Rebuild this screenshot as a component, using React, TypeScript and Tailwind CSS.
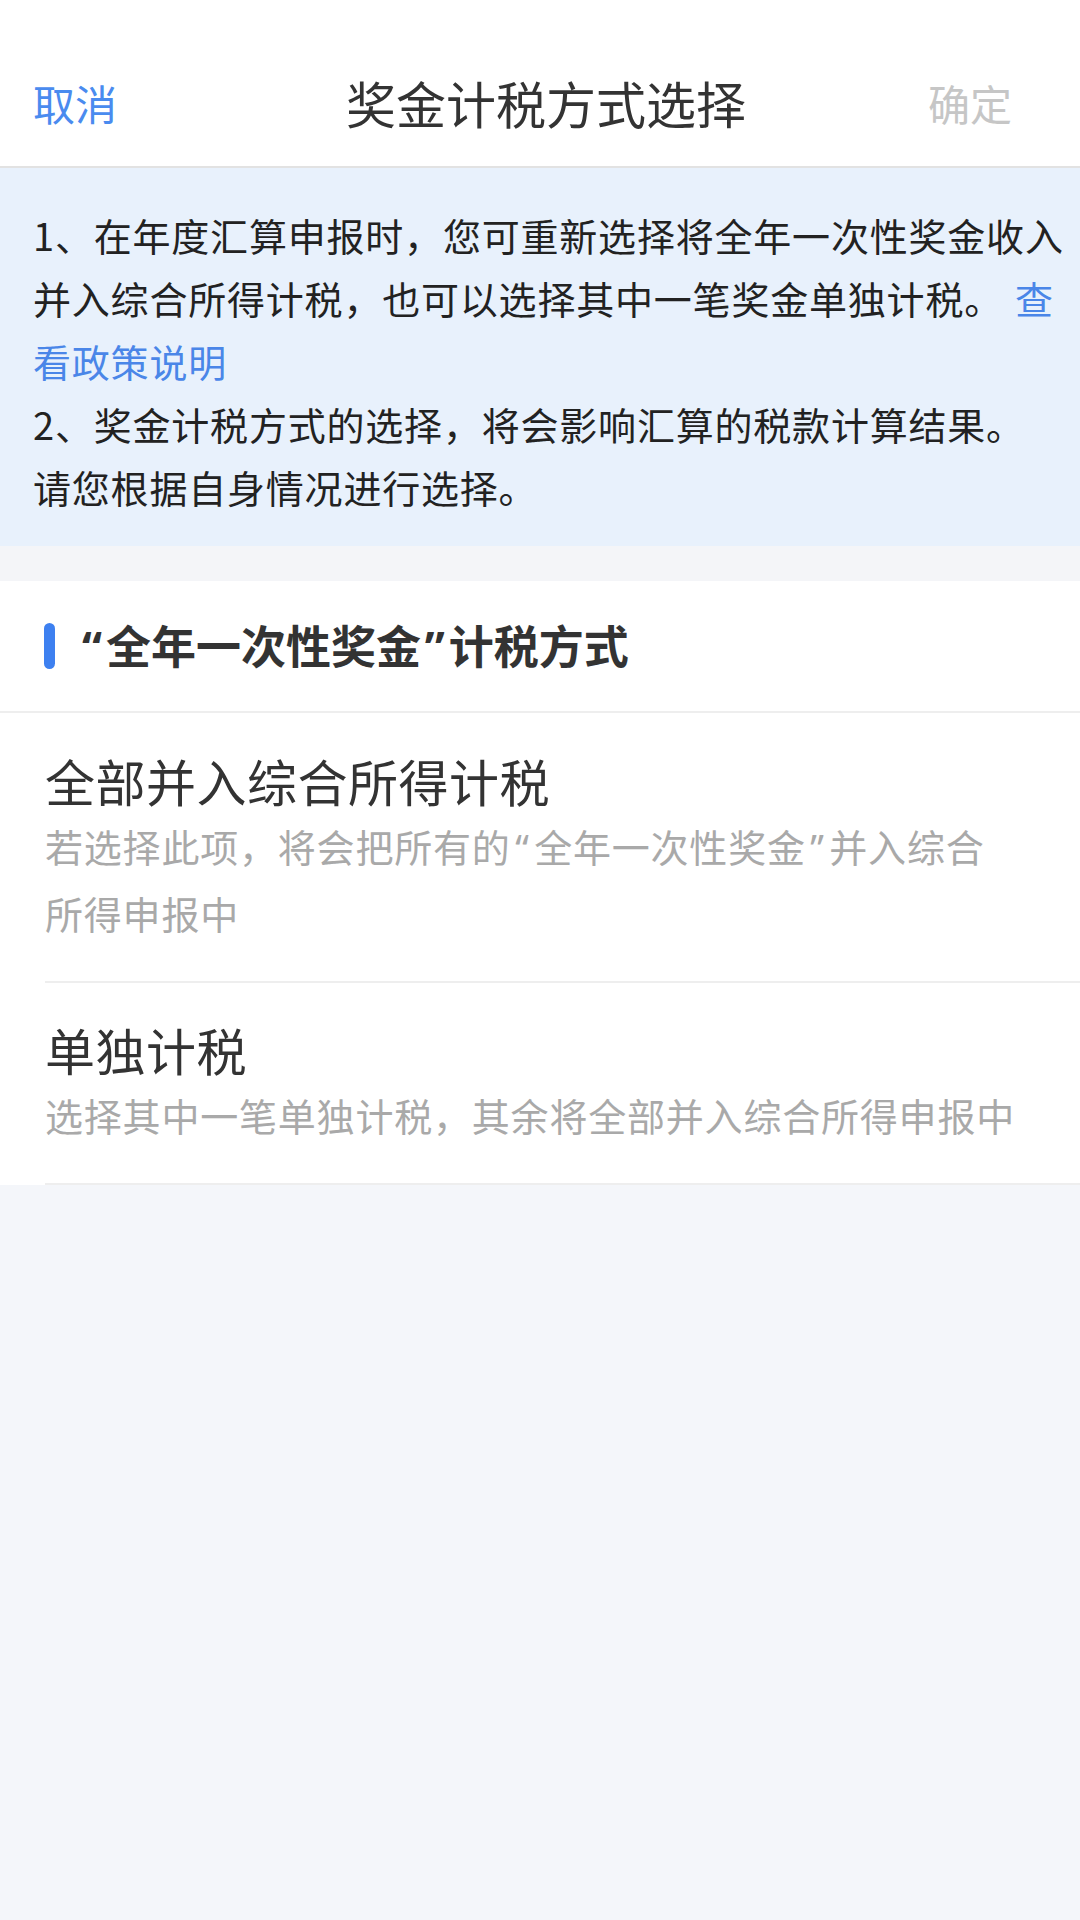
import React from "react";

function Q({ c }: { c: string }) {
  return (
    <span className="inline-block w-[0.62em] text-center font-['Noto_Sans',sans-serif]">{c}</span>
  );
}

export default function App() {
  return (
    <div
      className="min-h-[1920px] w-[1080px] bg-[#f4f6fa]"
      style={{ fontFamily: '"Noto Sans CJK SC", "Noto Sans", sans-serif' }}
    >
      {/* Header */}
      <div className="h-[168px] bg-white border-b-2 border-[#e2e2e2] pt-[38px] grid grid-cols-[1fr_auto_1fr] items-center">
        <div className="pl-[33px] text-[42px] text-[#4a8bef]">取消</div>
        <div className="pl-[12px] text-[50px] text-[#333333]">奖金计税方式选择</div>
        <div className="justify-self-end pr-[68px] text-[42px] text-[#c6c6c6]">确定</div>
      </div>

      {/* Info box */}
      <div className="bg-[#e8f1fc] pt-[35px] pb-[28px] pl-[33px] pr-[14px] text-[38px] leading-[63px] tracking-[0.8px] text-[#222222]">
        <p>
          1、在年度汇算申报时，您可重新选择将全年一次性奖金收入并入综合所得计税，也可以选择其中一笔奖金单独计税。
          <span className="ml-[12px] text-[#4a86e8]">查看政策说明</span>
        </p>
        <p>2、奖金计税方式的选择，将会影响汇算的税款计算结果。</p>
        <p>请您根据自身情况进行选择。</p>
      </div>

      {/* Gap */}
      <div className="h-[35px] bg-[#f4f5f8]" />

      {/* Section */}
      <div className="bg-white">
        <div className="h-[132px] border-b-2 border-[#eeeeee] flex items-center pl-[44px]">
          <div className="w-[11px] h-[46px] rounded-full bg-[#3d80f0]" />
          <div className="ml-[23px] text-[45px] font-bold text-[#333333] whitespace-nowrap">
            <Q c="“" />全年一次性奖金<Q c="”" />计税方式
          </div>
        </div>

        <div className="ml-[45px] border-b-2 border-[#eeeeee] pt-[35px] pb-[36px] pr-[32px]">
          <div className="text-[50px] leading-[65px] tracking-[0.5px] text-[#333333]">全部并入综合所得计税</div>
          <div className="text-[38px] leading-[65px] tracking-[0.8px] text-[#a9a9a9]">
            若选择此项，将会把所有的<Q c="“" />全年一次性奖金<Q c="”" />并入综合
            <br />
            所得申报中
          </div>
        </div>

        <div className="ml-[45px] border-b-2 border-[#eeeeee] pt-[34px] pb-[36px] pr-[20px]">
          <div className="text-[50px] leading-[65px] tracking-[0.5px] text-[#333333]">单独计税</div>
          <div className="text-[38px] leading-[65px] tracking-[0.8px] text-[#a9a9a9] whitespace-nowrap">
            选择其中一笔单独计税，其余将全部并入综合所得申报中
          </div>
        </div>
      </div>
    </div>
  );
}
